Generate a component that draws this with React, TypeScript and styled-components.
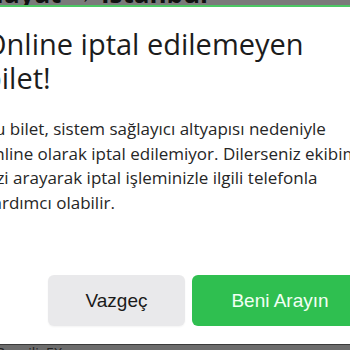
import React from "react";
import styled, { createGlobalStyle } from "styled-components";

const Global = createGlobalStyle`
  html, body { margin: 0; padding: 0; background: #6f6f6f; }
  body { width: 350px; height: 350px; overflow: hidden; }
`;

const Screen = styled.div`
  width: 350px;
  height: 350px;
  display: flex;
  flex-direction: column;
  overflow: hidden;
  background: #6f6f6f;
`;

const TopBar = styled.div`
  height: 5px;
  flex: none;
  background: #7a7a7a;
  overflow: hidden;
  border-bottom: 2px solid #4cc764;
`;

const TopText = styled.div`
  font-family: "Open Sans", sans-serif;
  font-weight: 700;
  font-size: 26px;
  line-height: 26px;
  color: #111;
  margin-top: -20px;
  margin-left: -16px;
  white-space: nowrap;
`;

const Modal = styled.div`
  flex: none;
  height: 337px;
  background: #fff;
  display: flex;
  flex-direction: column;
  box-sizing: border-box;
`;

const Content = styled.div`
  margin-left: -16px;
  padding-top: 20px;
  display: flex;
  flex-direction: column;
`;

const Title = styled.h1`
  margin: 0;
  font-family: "Open Sans", sans-serif;
  font-weight: 400;
  font-size: 29px;
  line-height: 34px;
  color: #1c1c1c;
  width: 345px;
`;

const Body = styled.p`
  margin: 22px 0 0 0;
  font-family: "Open Sans", sans-serif;
  font-size: 17px;
  line-height: 24.5px;
  color: #262626;
  white-space: nowrap;
`;

const Actions = styled.div`
  margin-top: auto;
  margin-bottom: 18px;
  display: flex;
  gap: 7px;
  padding-left: 48px;
`;

const Button = styled.button<{ $primary?: boolean }>`
  height: 51px;
  width: ${(p) => (p.$primary ? "176px" : "137px")};
  flex: none;
  border: none;
  border-radius: 6px;
  font-family: "Liberation Sans", Arial, sans-serif;
  font-size: 19px;
  background: ${(p) => (p.$primary ? "#2fbf50" : "#e9e9eb")};
  color: ${(p) => (p.$primary ? "#f2fff4" : "#1a1a1a")};
  box-shadow: ${(p) => (p.$primary ? "none" : "0 1px 2px rgba(0,0,0,0.05)")};
`;

const BottomBar = styled.div`
  flex: 1;
  border-top: 1px solid #3a3a3a;
  background: #6c6c6c;
  overflow: hidden;
`;

const BottomText = styled.div`
  font-family: "Open Sans", sans-serif;
  font-size: 14px;
  line-height: 14px;
  color: #222;
  margin-left: -4px;
  margin-top: 1px;
  white-space: nowrap;
`;

export default function App() {
  return (
    <Screen>
      <Global />
      <TopBar>
        <TopText>Hayat → İstanbul</TopText>
      </TopBar>
      <Modal>
        <Content>
          <Title>Online iptal edilemeyen bilet!</Title>
          <Body>
            Bu bilet, sistem sağlayıcı altyapısı nedeniyle
            <br />
            online olarak iptal edilemiyor. Dilerseniz ekibimiz
            <br />
            sizi arayarak iptal işleminizle ilgili telefonla
            <br />
            yardımcı olabilir.
          </Body>
        </Content>
        <Actions>
          <Button>Vazgeç</Button>
          <Button $primary>Beni Arayın</Button>
        </Actions>
      </Modal>
      <BottomBar>
        <BottomText>Bagajli: EX</BottomText>
      </BottomBar>
    </Screen>
  );
}
